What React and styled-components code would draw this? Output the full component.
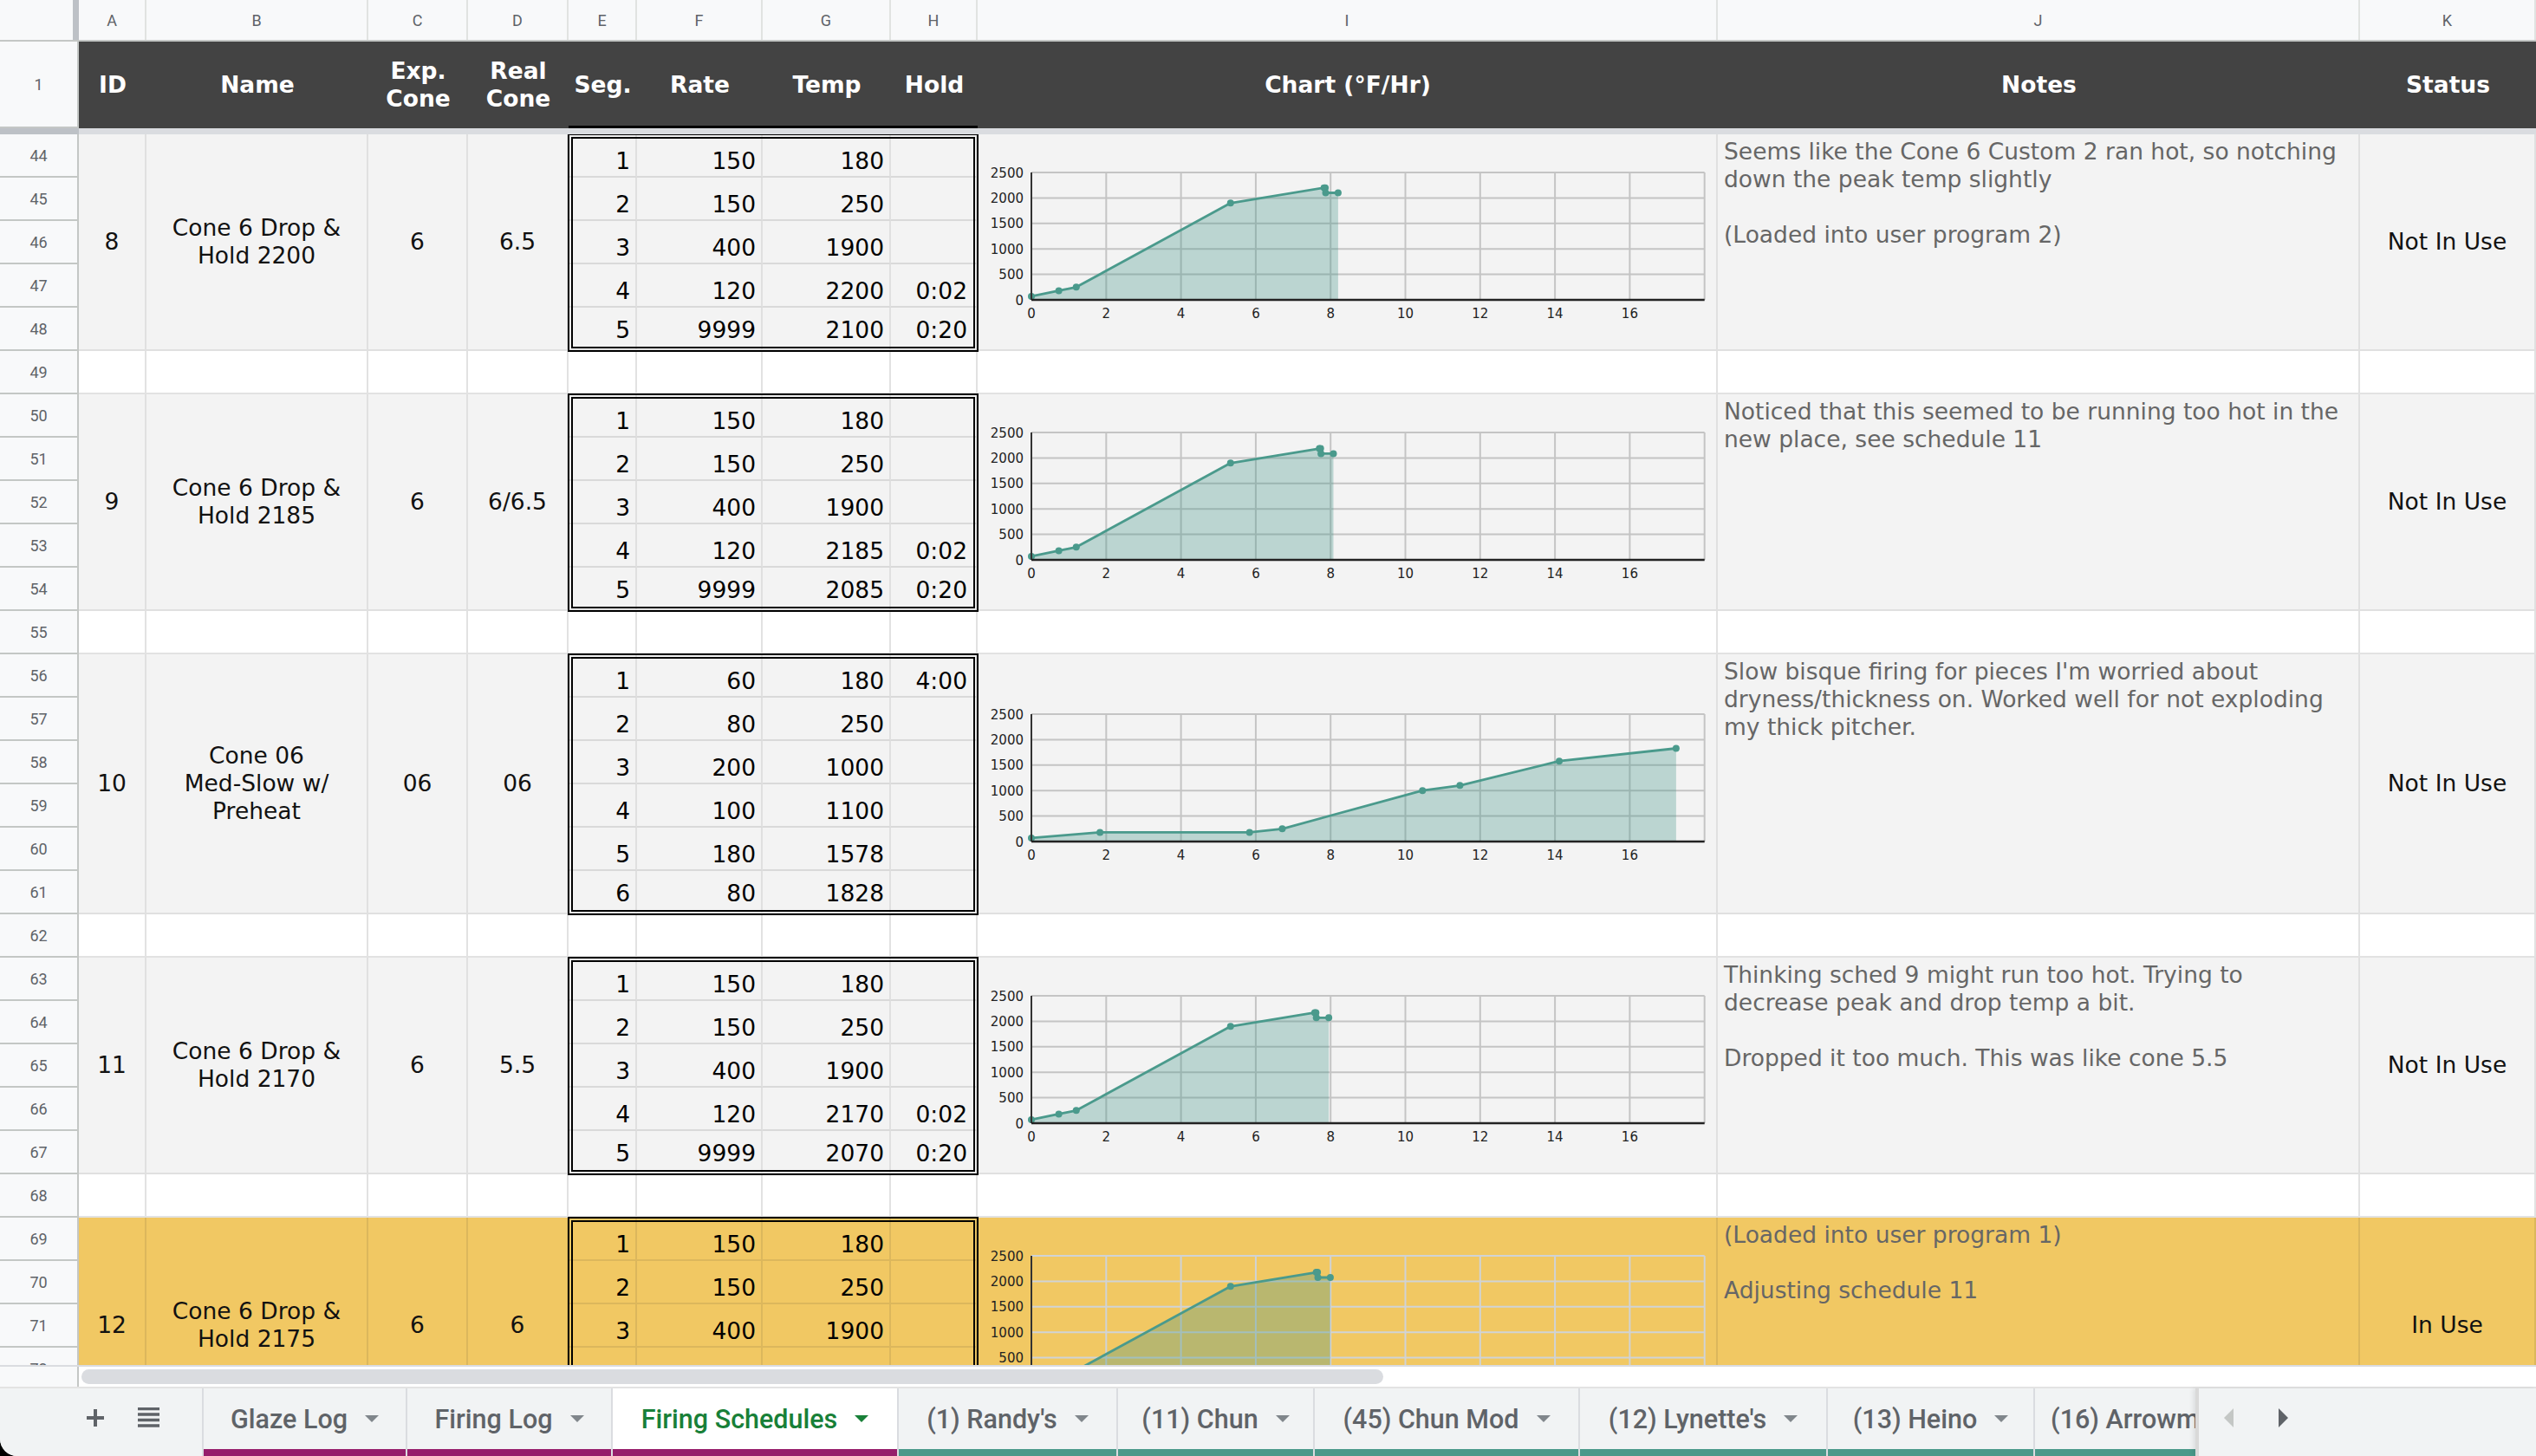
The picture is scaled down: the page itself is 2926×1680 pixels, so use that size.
import React from "react";
import styled, { createGlobalStyle } from "styled-components";

const GlobalStyle = createGlobalStyle`
  html, body { margin: 0; padding: 0; background: #000; }
  * { box-sizing: border-box; }
`;

const FULL_COLS = "91px 78px 256px 115px 116px 79px 145px 148px 100px 854px 741px 203px";
const GROUP_COLS = "91px 78px 256px 115px 116px 472px 854px 741px 203px";
const SEG_COLS = "79px 145px 148px 100px";

const TONES = {
  gray: { bg: "#f3f3f3", line: "#e0e0e0", seg: "#d9d9d9", grid: "#c4c4c4" },
  yellow: { bg: "#f1c863", line: "#dcb75c", seg: "#dcb75c", grid: "#d0d3d6" },
};

const START = 70;
const parseHold = (h) => {
  if (!h) return 0;
  const [a, b] = h.split(":").map(Number);
  return a + b / 60;
};
const profile = (segs) => {
  let t = 0;
  let temp = START;
  const pts = [[0, START]];
  segs.forEach(([, rate, target, hold]) => {
    t += Math.abs(target - temp) / rate;
    temp = target;
    pts.push([t, temp]);
    const hh = parseHold(hold);
    if (hh) {
      t += hh;
      pts.push([t, temp]);
    }
  });
  return pts;
};

const schedules = [
  {
    id: "8", first: 44, name: "Cone 6 Drop & Hold 2200", exp: "6", real: "6.5", tone: "gray",
    segs: [[1, 150, 180, ""], [2, 150, 250, ""], [3, 400, 1900, ""], [4, 120, 2200, "0:02"], [5, 9999, 2100, "0:20"]],
    notes: "Seems like the Cone 6 Custom 2 ran hot, so notching down the peak temp slightly\n\n(Loaded into user program 2)",
    status: "Not In Use",
  },
  {
    id: "9", first: 50, name: "Cone 6 Drop & Hold 2185", exp: "6", real: "6/6.5", tone: "gray",
    segs: [[1, 150, 180, ""], [2, 150, 250, ""], [3, 400, 1900, ""], [4, 120, 2185, "0:02"], [5, 9999, 2085, "0:20"]],
    notes: "Noticed that this seemed to be running too hot in the new place, see schedule 11",
    status: "Not In Use",
  },
  {
    id: "10", first: 56, name: "Cone 06 Med-Slow w/ Preheat", exp: "06", real: "06", tone: "gray",
    segs: [[1, 60, 180, "4:00"], [2, 80, 250, ""], [3, 200, 1000, ""], [4, 100, 1100, ""], [5, 180, 1578, ""], [6, 80, 1828, ""]],
    notes: "Slow bisque firing for pieces I'm worried about dryness/thickness on. Worked well for not exploding my thick pitcher.",
    status: "Not In Use",
  },
  {
    id: "11", first: 63, name: "Cone 6 Drop & Hold 2170", exp: "6", real: "5.5", tone: "gray",
    segs: [[1, 150, 180, ""], [2, 150, 250, ""], [3, 400, 1900, ""], [4, 120, 2170, "0:02"], [5, 9999, 2070, "0:20"]],
    notes: "Thinking sched 9 might run too hot. Trying to decrease peak and drop temp a bit.\n\nDropped it too much. This was like cone 5.5",
    status: "Not In Use",
  },
  {
    id: "12", first: 69, name: "Cone 6 Drop & Hold 2175", exp: "6", real: "6", tone: "yellow",
    segs: [[1, 150, 180, ""], [2, 150, 250, ""], [3, 400, 1900, ""], [4, 120, 2175, "0:02"], [5, 9999, 2075, "0:20"]],
    notes: "(Loaded into user program 1)\n\nAdjusting schedule 11",
    status: "In Use",
  },
];

const tabs = [
  { label: "Glaze Log", bar: "#961d6b", w: 235 },
  { label: "Firing Log", bar: "#961d6b", w: 237 },
  { label: "Firing Schedules", bar: "#961d6b", active: true, w: 330 },
  { label: "(1) Randy's", bar: "#4a998a", w: 253 },
  { label: "(11) Chun", bar: "#4a998a", w: 227 },
  { label: "(45) Chun Mod", bar: "#4a998a", w: 306 },
  { label: "(12) Lynette's", bar: "#4a998a", w: 286 },
  { label: "(13) Heino", bar: "#4a998a", w: 239 },
  { label: "(16) Arrowmont", bar: "#4a998a", w: 290 },
];

/* ---------- page frame ---------- */
const Page = styled.div`
  width: 2926px;
  height: 1680px;
  display: flex;
  flex-direction: column;
  background: #fff;
  overflow: hidden;
  border-bottom-left-radius: 20px;
  font-family: "DejaVu Sans", Verdana, sans-serif;
`;

const LetterRow = styled.div`
  flex: none;
  display: grid;
  grid-template-columns: ${FULL_COLS};
  height: 48px;
  background: #f8f9fa;
  border-bottom: 2px solid #c4c7c5;
`;

const Letter = styled.div`
  display: flex;
  align-items: center;
  justify-content: center;
  border-right: ${(p) => (p.$corner ? "7px solid #bdc1c6" : "2px solid #e1e3e1")};
  font-family: Roboto, "Liberation Sans", sans-serif;
  font-size: 18px;
  color: #5f6368;
`;

const HeaderRow = styled.div`
  flex: none;
  display: grid;
  grid-template-columns: ${FULL_COLS};
  height: 100px;
  background: #434343;
`;

const HeadCell = styled.div`
  display: flex;
  align-items: center;
  justify-content: center;
  text-align: center;
  white-space: pre-line;
  color: #fff;
  font-weight: 700;
  font-size: 26.5px;
  line-height: 32px;
  box-shadow: ${(p) => (p.$boxed ? "inset 0 -3px 0 #000" : "none")};
`;

const RowNum = styled.div`
  grid-column: 1;
  grid-row: ${(p) => p.$row || "auto"};
  display: flex;
  align-items: center;
  justify-content: center;
  background: #f8f9fa;
  border-right: 2px solid #c4c7c5;
  border-bottom: 2px solid #c4c7c5;
  font-family: Roboto, "Liberation Sans", sans-serif;
  font-size: 18px;
  color: #5f6368;
`;

const FreezeBar = styled.div`
  flex: none;
  display: grid;
  grid-template-columns: 91px 1fr;
  height: 7px;
`;
const FreezePart = styled.div`
  background: ${(p) => (p.$gutter ? "#bdc1c6" : "#dadce0")};
`;

const Body = styled.div`
  flex: 1;
  min-height: 0;
  overflow: hidden;
  display: flex;
  flex-direction: column;
`;

/* ---------- groups ---------- */
const GroupGrid = styled.div`
  flex: none;
  display: grid;
  grid-template-columns: ${GROUP_COLS};
  grid-template-rows: repeat(${(p) => p.$n}, 50px);
  background: ${(p) => TONES[p.$tone].bg};
`;

const Merged = styled.div`
  grid-column: ${(p) => p.$col};
  grid-row: 1 / span ${(p) => p.$n};
  display: flex;
  align-items: ${(p) => (p.$top ? "flex-start" : "center")};
  justify-content: ${(p) => (p.$top ? "flex-start" : "center")};
  text-align: ${(p) => (p.$top ? "left" : "center")};
  padding: ${(p) => (p.$top ? "4px 7px" : p.$flush ? "0" : "0 8px")};
  border-right: 2px solid ${(p) => TONES[p.$tone].line};
  border-bottom: 2px solid ${(p) => TONES[p.$tone].line};
  font-size: 26.5px;
  line-height: 32px;
  white-space: pre-wrap;
  color: ${(p) => (p.$muted ? "#666666" : "#111111")};
`;

const NoBreak = styled.span`
  white-space: nowrap;
`;

const SegBox = styled.div`
  grid-column: 6;
  grid-row: 1 / span ${(p) => p.$n};
  display: grid;
  grid-template-columns: ${SEG_COLS};
  grid-template-rows: repeat(${(p) => p.$n}, 50px);
  outline: 6px double #000;
  outline-offset: -5px;
  position: relative;
  z-index: 1;
`;

const SegCell = styled.div`
  display: flex;
  align-items: flex-end;
  justify-content: flex-end;
  padding: 0 ${(p) => (p.$hold ? 10 : 6)}px ${(p) => (p.$last ? 6 : 1)}px 0;
  border-right: 2px solid ${(p) => TONES[p.$tone].line};
  border-bottom: 2px solid ${(p) => TONES[p.$tone].seg};
  font-size: 26.5px;
  line-height: 32px;
  color: #000;
`;

const BlankGrid = styled.div`
  flex: none;
  display: grid;
  grid-template-columns: ${FULL_COLS};
  height: 50px;
  background: #fff;
`;
const BlankCell = styled.div`
  border-right: 2px solid #e2e2e2;
  border-bottom: 2px solid #e2e2e2;
`;

/* ---------- chart ---------- */
const PX = 62;
const PY0 = 167;
const PTOP = 20;
const XS = 43.15;
const YS = (PY0 - PTOP) / 2500;
const ChartSvg = styled.svg`
  display: block;
  font-family: "DejaVu Sans", Verdana, sans-serif;
`;

function Chart({ segs, tone }) {
  const pts = profile(segs);
  const xy = pts.map(([t, v]) => [PX + t * XS, PY0 - v * YS]);
  const right = PX + 18 * XS;
  const last = xy[xy.length - 1];
  const poly = [[PX, PY0], ...xy, [last[0], PY0]].map((p) => p.join(",")).join(" ");
  const gridColor = TONES[tone].grid;
  return (
    <ChartSvg width="852" height="200" viewBox="0 0 852 200">
      {[500, 1000, 1500, 2000, 2500].map((v) => (
        <line key={"h" + v} x1={PX} x2={right} y1={PY0 - v * YS} y2={PY0 - v * YS} stroke={gridColor} strokeWidth="2" />
      ))}
      {[2, 4, 6, 8, 10, 12, 14, 16, 18].map((h) => (
        <line key={"v" + h} x1={PX + h * XS} x2={PX + h * XS} y1={PTOP} y2={PY0} stroke={gridColor} strokeWidth="2" />
      ))}
      <polygon points={poly} fill="rgba(69,150,138,0.32)" />
      <polyline points={xy.map((p) => p.join(",")).join(" ")} fill="none" stroke="#4a9a8c" strokeWidth="2.8" strokeLinejoin="round" />
      {xy.map(([x, y], i) => (
        <circle key={i} cx={x} cy={y} r="4" fill="#4a9a8c" />
      ))}
      <line x1={PX} x2={PX} y1={PTOP} y2={PY0} stroke="#333" strokeWidth="2" />
      <line x1={PX} x2={right} y1={PY0} y2={PY0} stroke="#222" strokeWidth="2.5" />
      {[0, 500, 1000, 1500, 2000, 2500].map((v) => (
        <text key={"yl" + v} x={PX - 9} y={PY0 - v * YS + 5.5} textAnchor="end" fontSize="15" fill="#222">
          {v}
        </text>
      ))}
      {[0, 2, 4, 6, 8, 10, 12, 14, 16].map((h) => (
        <text key={"xl" + h} x={PX + h * XS} y={PY0 + 21} textAnchor="middle" fontSize="15" fill="#222">
          {h}
        </text>
      ))}
    </ChartSvg>
  );
}

const renderName = (name) =>
  name.split(" ").map((w, i, arr) => {
    const sep = i < arr.length - 1 ? " " : "";
    return w.includes("-") ? (
      <React.Fragment key={i}>
        <NoBreak>{w}</NoBreak>
        {sep}
      </React.Fragment>
    ) : (
      <React.Fragment key={i}>{w + sep}</React.Fragment>
    );
  });

function Group({ s }) {
  const n = s.segs.length;
  const t = s.tone;
  return (
    <GroupGrid $n={n} $tone={t}>
      {s.segs.map((_, i) => (
        <RowNum key={i} $row={i + 1}>{s.first + i}</RowNum>
      ))}
      <Merged $col={2} $n={n} $tone={t}>{s.id}</Merged>
      <Merged $col={3} $n={n} $tone={t}>
        <span>{renderName(s.name)}</span>
      </Merged>
      <Merged $col={4} $n={n} $tone={t}>{s.exp}</Merged>
      <Merged $col={5} $n={n} $tone={t}>{s.real}</Merged>
      <SegBox $n={n}>
        {s.segs.map((row, i) =>
          row.map((v, j) => (
            <SegCell key={i + "-" + j} $tone={t} $hold={j === 3} $last={i === n - 1}>
              {v}
            </SegCell>
          ))
        )}
      </SegBox>
      <Merged $col={7} $n={n} $tone={t} $flush>
        <Chart segs={s.segs} tone={t} />
      </Merged>
      <Merged $col={8} $n={n} $tone={t} $top $muted>{s.notes}</Merged>
      <Merged $col={9} $n={n} $tone={t}>{s.status}</Merged>
    </GroupGrid>
  );
}

function BlankRow({ num }) {
  return (
    <BlankGrid>
      <RowNum>{num}</RowNum>
      {Array.from({ length: 11 }).map((_, i) => (
        <BlankCell key={i} />
      ))}
    </BlankGrid>
  );
}

/* ---------- bottom strip & tabs ---------- */
const ScrollStrip = styled.div`
  flex: none;
  display: flex;
  height: 25px;
  background: #fff;
  border-top: 2px solid #dadce0;
`;
const ScrollGutter = styled.div`
  width: 91px;
  background: #f8f9fa;
  border-right: 2px solid #c4c7c5;
`;
const ScrollTrack = styled.div`
  flex: 1;
  padding: 3px 0 0 3px;
`;
const Thumb = styled.div`
  width: 1502px;
  height: 17px;
  border-radius: 9px;
  background: #dadce0;
`;

const TabBar = styled.div`
  flex: none;
  display: flex;
  height: 80px;
  background: #f1f3f4;
  border-top: 2px solid #e3e3e3;
`;
const LeftControls = styled.div`
  flex: none;
  width: 233px;
  display: flex;
  align-items: center;
  gap: 38px;
  padding: 0 0 10px 99px;
`;
const TabStrip = styled.div`
  flex: none;
  width: 2300px;
  display: flex;
  overflow: hidden;
  border-left: 2px solid #dadce0;
`;
const Tab = styled.div`
  flex: none;
  width: ${(p) => p.$w}px;
  display: flex;
  align-items: center;
  justify-content: center;
  gap: 20px;
  padding: 0 0 8px;
  border-right: 2px solid #dadce0;
  background: ${(p) => (p.$active ? "#fff" : "transparent")};
  box-shadow: inset 0 -8px 0 ${(p) => p.$bar};
  font-family: Roboto, "Liberation Sans", sans-serif;
  font-weight: 500;
  font-size: 30.5px;
  white-space: nowrap;
  overflow: hidden;
  color: ${(p) => (p.$active ? "#188038" : "#5f6368")};
`;
const Caret = styled.span`
  flex: none;
  width: 0;
  height: 0;
  border-left: 8px solid transparent;
  border-right: 8px solid transparent;
  border-top: 8px solid ${(p) => (p.$active ? "#188038" : "#80868b")};
`;
const ArrowArea = styled.div`
  flex: 1;
  display: flex;
  align-items: center;
  gap: 52px;
  padding: 0 0 10px 29px;
  border-left: 4px solid #d9d9d9;
  box-shadow: -3px 0 5px rgba(0, 0, 0, 0.08);
`;
const Arrow = styled.span`
  width: 0;
  height: 0;
  border-top: 11px solid transparent;
  border-bottom: 11px solid transparent;
  ${(p) =>
    p.$dir === "left"
      ? `border-right: 11px solid ${p.$disabled ? "#c4c7c5" : "#5f6368"};`
      : `border-left: 11px solid ${p.$disabled ? "#c4c7c5" : "#5f6368"};`}
`;

const PlusIcon = () => (
  <svg width="22" height="22" viewBox="0 0 22 22">
    <path d="M11 1v20M1 11h20" stroke="#5f6368" strokeWidth="4" />
  </svg>
);
const ListIcon = () => (
  <svg width="25" height="24" viewBox="0 0 25 24">
    {[1.5, 8, 14.5, 21].map((y) => (
      <rect key={y} x="0" y={y - 1.75} width="25" height="3.5" fill="#5f6368" />
    ))}
  </svg>
);

const LETTERS = ["", "A", "B", "C", "D", "E", "F", "G", "H", "I", "J", "K"];
const HEADS = ["ID", "Name", "Exp.\nCone", "Real\nCone", "Seg.", "Rate", "Temp", "Hold", "Chart (°F/Hr)", "Notes", "Status"];

export default function App() {
  const body = [];
  schedules.forEach((s, i) => {
    body.push(<Group key={"g" + s.id} s={s} />);
    if (i < schedules.length - 1) body.push(<BlankRow key={"b" + s.id} num={s.first + s.segs.length} />);
  });
  return (
    <>
      <GlobalStyle />
      <Page>
        <LetterRow>
          {LETTERS.map((l, i) => (
            <Letter key={i} $corner={i === 0}>{l}</Letter>
          ))}
        </LetterRow>
        <HeaderRow>
          <RowNum>1</RowNum>
          {HEADS.map((h, i) => (
            <HeadCell key={i} $boxed={i >= 4 && i <= 7}>{h}</HeadCell>
          ))}
        </HeaderRow>
        <FreezeBar>
          <FreezePart $gutter />
          <FreezePart />
        </FreezeBar>
        <Body>{body}</Body>
        <ScrollStrip>
          <ScrollGutter />
          <ScrollTrack>
            <Thumb />
          </ScrollTrack>
        </ScrollStrip>
        <TabBar>
          <LeftControls>
            <PlusIcon />
            <ListIcon />
          </LeftControls>
          <TabStrip>
            {tabs.map((t) => (
              <Tab key={t.label} $active={t.active} $bar={t.bar} $w={t.w}>
                {t.label}
                <Caret $active={t.active} />
              </Tab>
            ))}
          </TabStrip>
          <ArrowArea>
            <Arrow $dir="left" $disabled />
            <Arrow $dir="right" />
          </ArrowArea>
        </TabBar>
      </Page>
    </>
  );
}
